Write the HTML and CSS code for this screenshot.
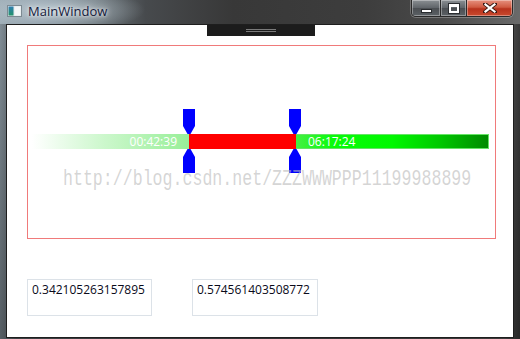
FILE: index.html
```html
<!DOCTYPE html>
<html>
<head>
<meta charset="utf-8">
<title>MainWindow</title>
<link rel="stylesheet" href="styles.css">
</head>
<body>
<div class="window">
  <div class="titlebar">
    <div class="title">
      <svg class="app-icon" width="15" height="12" viewBox="0 0 15 12">
        <defs>
          <linearGradient id="pane" x1="0" y1="0" x2="0" y2="1">
            <stop offset="0" stop-color="#2f7fb0"/>
            <stop offset="1" stop-color="#23926a"/>
          </linearGradient>
        </defs>
        <rect x="0.5" y="0.5" width="14" height="11" fill="#dfe6ea" stroke="#7d8a92"/>
        <rect x="1.5" y="1.5" width="5" height="9" fill="url(#pane)"/>
        <rect x="7.5" y="1.5" width="6" height="9" fill="#f4f7f8"/>
      </svg>
      <span class="title-text">MainWindow</span>
    </div>
    <div class="caption">
      <div class="cap-btn cap-min"><span class="glyph-min"></span></div>
      <div class="cap-btn cap-max"><span class="glyph-max"></span></div>
      <div class="cap-btn cap-close">
        <svg width="14" height="10" viewBox="0 0 14 10">
          <path d="M2 1 L12 9 M12 1 L2 9" stroke="#3a1a14" stroke-width="4" stroke-linecap="square"/>
          <path d="M2.5 1.5 L11.5 8.5 M11.5 1.5 L2.5 8.5" stroke="#ffffff" stroke-width="2.2" stroke-linecap="square"/>
        </svg>
      </div>
    </div>
  </div>
  <div class="client">
    <div class="grip"><span class="grip-lines"></span></div>
    <div class="stage">
      <div class="track">
        <div class="seg seg-before"><span class="seg-label">00:42:39</span></div>
        <div class="seg seg-range"></div>
        <div class="seg seg-after"><span class="seg-label">06:17:24</span></div>
        <svg class="thumb thumb-a" width="12" height="64" viewBox="0 0 12 64">
          <path d="M0 0 H12 V17 L7.5 25 H4.5 L0 17 Z" fill="#0000ff"/>
          <path d="M0 64 H12 V48 L7.5 40 H4.5 L0 48 Z" fill="#0000ff"/>
        </svg>
        <svg class="thumb thumb-b" width="12" height="64" viewBox="0 0 12 64">
          <path d="M0 0 H12 V17 L7.5 25 H4.5 L0 17 Z" fill="#0000ff"/>
          <path d="M0 64 H12 V48 L7.5 40 H4.5 L0 48 Z" fill="#0000ff"/>
        </svg>
      </div>
    </div>
    <div class="values">
      <div class="value-box value-a">0.342105263157895</div>
      <div class="value-box value-b">0.574561403508772</div>
    </div>
  </div>
  <div class="watermark">http://blog.csdn.net/ZZZWWWPPP11199988899</div>
</div>
</body>
</html>
```

FILE: styles.css
```css
html, body {
  margin: 0;
  padding: 0;
}

body {
  width: 520px;
  height: 339px;
  overflow: hidden;
  background: #3a3a3a;
  font-family: "Segoe UI", "Open Sans", "Noto Sans", sans-serif;
}

.window {
  position: relative;
  width: 520px;
  height: 339px;
  box-sizing: border-box;
  padding: 0 6px 1px 6px;
  display: flex;
  flex-direction: column;
  background:
    linear-gradient(180deg, rgba(0,0,0,0) 0%, rgba(0,0,0,0.35) 100%),
    linear-gradient(90deg, #84919a 0%, #5d6368 3%, #4a4d50 50%, #5c5c5c 97%, #3a3a3a 100%);
}

.titlebar {
  height: 24px;
  margin: 0 -6px;
  display: flex;
  justify-content: space-between;
  align-items: flex-start;
  background:
    radial-gradient(ellipse 90px 22px at 55px 10px, rgba(200,214,222,0.75), rgba(200,214,222,0) 100%),
    linear-gradient(90deg, #9aa9b2 0%, #8795a0 8%, #6c767c 18%, #474a4d 28%, #383838 45%, #3d3d3d 70%, #4a4a4a 85%, #6a6a6a 100%);
}

.title {
  display: flex;
  align-items: center;
  gap: 6px;
  padding: 3px 0 0 7px;
}

.app-icon {
  display: block;
}

.title-text {
  font-size: 13px;
  line-height: 16px;
  color: #141a3c;
  text-shadow: 0 0 6px rgba(255,255,255,0.9), 0 0 3px rgba(255,255,255,0.8);
}

.caption {
  display: flex;
  margin-right: 7px;
  height: 16px;
  border: 1px solid #2a2a2a;
  border-top: none;
  border-radius: 0 0 5px 5px;
  overflow: hidden;
  box-shadow: 0 0 0 1px rgba(255,255,255,0.25);
}

.cap-btn {
  height: 16px;
  display: flex;
  align-items: center;
  justify-content: center;
  box-sizing: border-box;
  border-right: 1px solid #2a2a2a;
  box-shadow: inset 0 0 0 1px rgba(255,255,255,0.35);
}

.cap-min {
  width: 29px;
  background: linear-gradient(180deg, #8a8f93 0%, #5e6368 50%, #4a4e52 51%, #5c6165 100%);
}

.cap-max {
  width: 26px;
  background: linear-gradient(180deg, #8a8f93 0%, #5e6368 50%, #4a4e52 51%, #5c6165 100%);
}

.cap-close {
  width: 45px;
  border-right: none;
  background: linear-gradient(180deg, #e6907e 0%, #d05a42 45%, #b7321c 55%, #c94a2e 100%);
}

.glyph-min {
  display: block;
  width: 9px;
  height: 2px;
  margin-top: 6px;
  background: #ffffff;
  border: 1px solid #2a2d30;
}

.glyph-max {
  display: block;
  width: 6px;
  height: 4px;
  border: 2px solid #ffffff;
  border-top-width: 3px;
  outline: 1px solid #2a2d30;
}

.client {
  height: 314px;
  box-sizing: border-box;
  background: #ffffff;
  border: 1px solid #1e1e1e;
  display: flex;
  flex-direction: column;
  align-items: flex-start;
}

.grip {
  margin-left: 200px;
  width: 108px;
  height: 11px;
  background: #1c1c1c;
  display: flex;
  align-items: center;
  justify-content: center;
}

.grip-lines {
  display: block;
  width: 30px;
  height: 1px;
  border-top: 1px solid #7a7a7a;
  border-bottom: 1px solid #7a7a7a;
  margin-top: -1px;
}

.stage {
  margin: 9px 0 0 20px;
  width: 469px;
  height: 194px;
  box-sizing: border-box;
  border: 1px solid #f07a7a;
  padding: 88px 0 0 4px;
}

.track {
  position: relative;
  display: flex;
  width: 457px;
  height: 15px;
}

.seg {
  height: 15px;
  display: flex;
  align-items: center;
  box-sizing: border-box;
}

.seg-before {
  width: 157px;
  justify-content: flex-end;
  padding-right: 12px;
  background: linear-gradient(90deg, rgba(144,238,144,0) 0%, rgba(144,238,144,0.45) 45%, #98ef98 100%);
}

.seg-range {
  width: 107px;
  background: #ff0000;
}

.seg-after {
  width: 193px;
  padding-left: 12px;
  border: 1px solid #66e466;
  border-left: none;
  background: linear-gradient(90deg, #44f044 0%, #08fc08 20%, #00f800 50%, #00c800 75%, #008a00 100%);
}

.seg-label {
  font-size: 12px;
  line-height: 15px;
  color: #ffffff;
}

.thumb {
  position: absolute;
  top: -25px;
}

.thumb-a {
  left: 151px;
}

.thumb-b {
  left: 257px;
}

.values {
  display: flex;
  gap: 40px;
  margin: 40px 0 0 20px;
}

.value-box {
  height: 37px;
  box-sizing: border-box;
  border: 1px solid #dce2e8;
  padding: 2px 0 0 4px;
  font-size: 12px;
  line-height: 16px;
  color: #0a0a1a;
  background: #ffffff;
}

.value-a {
  width: 125px;
}

.value-b {
  width: 126px;
}

.watermark {
  position: absolute;
  left: 63px;
  top: 168px;
  font-family: "Liberation Mono", "Courier New", monospace;
  font-size: 16.6px;
  line-height: 18px;
  color: rgba(185,185,185,0.6);
  white-space: nowrap;
  transform: scaleY(1.3);
  transform-origin: 0 0;
  pointer-events: none;
}
```
